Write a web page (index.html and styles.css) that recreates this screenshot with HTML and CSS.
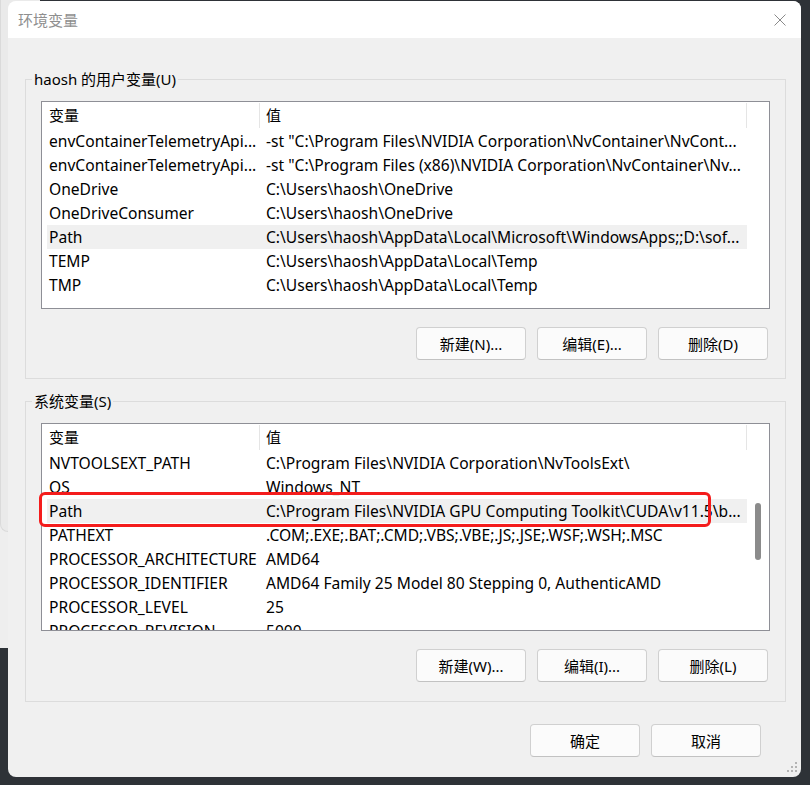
FILE: index.html
```html
<!DOCTYPE html>
<html lang="zh-CN">
<head>
    <meta charset="UTF-8">
    <title>环境变量</title>
    <link rel="stylesheet" href="styles.css">
</head>
<body>
    <div class="behind behind-low"></div>
    <div class="behind behind-high"></div>

    <div class="dialog">
        <div class="titlebar">
            <span class="title">环境变量</span>
            <svg class="close" width="12" height="12" viewBox="0 0 12 12">
                <path d="M0.5 0.5L11.5 11.5M11.5 0.5L0.5 11.5" stroke="#8a8a8a" stroke-width="1" fill="none"/>
            </svg>
        </div>

        <div class="content">
            <fieldset class="group">
                <legend>haosh 的用户变量(U)</legend>
                <div class="list-wrap">
                    <div class="list">
                        <div class="rows">
                            <div class="row head"><span>变量</span><span>值</span></div>
                            <div class="row"><span>envContainerTelemetryApi...</span><span>-st "C:\Program Files\NVIDIA Corporation\NvContainer\NvCont...</span></div>
                            <div class="row"><span>envContainerTelemetryApi...</span><span>-st "C:\Program Files (x86)\NVIDIA Corporation\NvContainer\Nv...</span></div>
                            <div class="row"><span>OneDrive</span><span>C:\Users\haosh\OneDrive</span></div>
                            <div class="row"><span>OneDriveConsumer</span><span>C:\Users\haosh\OneDrive</span></div>
                            <div class="row sel"><span>Path</span><span>C:\Users\haosh\AppData\Local\Microsoft\WindowsApps;;D:\sof...</span></div>
                            <div class="row"><span>TEMP</span><span>C:\Users\haosh\AppData\Local\Temp</span></div>
                            <div class="row"><span>TMP</span><span>C:\Users\haosh\AppData\Local\Temp</span></div>
                        </div>
                        <div class="scroll"></div>
                    </div>
                </div>
                <div class="actions">
                    <button>新建(N)...</button>
                    <button>编辑(E)...</button>
                    <button>删除(D)</button>
                </div>
            </fieldset>

            <fieldset class="group system">
                <legend>系统变量(S)</legend>
                <div class="list-wrap">
                    <div class="list">
                        <div class="rows">
                            <div class="row head"><span>变量</span><span>值</span></div>
                            <div class="row"><span>NVTOOLSEXT_PATH</span><span>C:\Program Files\NVIDIA Corporation\NvToolsExt\</span></div>
                            <div class="row"><span>OS</span><span>Windows_NT</span></div>
                            <div class="row sel"><span>Path</span><span>C:\Program Files\NVIDIA GPU Computing Toolkit\CUDA\v11.5\b...</span></div>
                            <div class="row"><span>PATHEXT</span><span>.COM;.EXE;.BAT;.CMD;.VBS;.VBE;.JS;.JSE;.WSF;.WSH;.MSC</span></div>
                            <div class="row"><span>PROCESSOR_ARCHITECTURE</span><span>AMD64</span></div>
                            <div class="row"><span>PROCESSOR_IDENTIFIER</span><span>AMD64 Family 25 Model 80 Stepping 0, AuthenticAMD</span></div>
                            <div class="row"><span>PROCESSOR_LEVEL</span><span>25</span></div>
                            <div class="row"><span>PROCESSOR_REVISION</span><span>5000</span></div>
                        </div>
                        <div class="scroll"><div class="thumb"></div></div>
                    </div>
                    <div class="mark"></div>
                </div>
                <div class="actions">
                    <button>新建(W)...</button>
                    <button>编辑(I)...</button>
                    <button>删除(L)</button>
                </div>
            </fieldset>

            <div class="footer">
                <button>确定</button>
                <button>取消</button>
            </div>
        </div>

        <svg class="grip" width="11" height="11" viewBox="0 0 11 11">
            <rect x="8" y="0" width="2" height="2" fill="#b4b4b4"/>
            <rect x="4" y="4" width="2" height="2" fill="#b4b4b4"/>
            <rect x="8" y="4" width="2" height="2" fill="#b4b4b4"/>
            <rect x="0" y="8" width="2" height="2" fill="#b4b4b4"/>
            <rect x="4" y="8" width="2" height="2" fill="#b4b4b4"/>
            <rect x="8" y="8" width="2" height="2" fill="#b4b4b4"/>
        </svg>
    </div>
</body>
</html>
```

FILE: styles.css
```css
* {
    box-sizing: border-box;
}
body {
    margin: 0;
    padding-top: 1px;
    width: 810px;
    height: 785px;
    overflow: hidden;
    position: relative;
    background-color: #2e3237;
    font-family: "Noto Sans", "Noto Sans CJK SC", sans-serif;
    font-size: 15px;
    color: #000;
}
.behind {
    position: absolute;
}
.behind-low {
    left: -20px;
    top: 0;
    width: 50px;
    height: 648px;
    background-color: #eeeeee;
}
.behind-high {
    left: 0;
    top: -10px;
    width: 40px;
    height: 542px;
    background-color: #eaeaea;
    border-left: 1px solid #dadada;
    border-bottom: 1px solid #dadada;
    border-radius: 0 0 0 8px;
}
.dialog {
    position: relative;
    margin-left: 8px;
    width: 793px;
    height: 776px;
    background-color: #f0f0f0;
    border-radius: 8px;
    overflow: hidden;
}
.titlebar {
    height: 37px;
    background-color: #fff;
    display: flex;
    align-items: center;
    justify-content: space-between;
    padding: 0 15px 0 10px;
}
.title {
    color: #8f8f8f;
}
.content {
    padding: 31px 15px 0 17px;
}
.group {
    margin: 0;
    padding: 12px 15px 18px;
    border: 1px solid #dcdcdc;
    min-width: 0;
}
.group legend {
    padding: 0 2px;
    margin-left: -9px;
    line-height: 20px;
}
.system {
    margin-top: 12px;
    padding-bottom: 19px;
}
.list-wrap {
    position: relative;
}
.list {
    display: flex;
    height: 208px;
    border: 1px solid #8e8f96;
    background-color: #fff;
    overflow: hidden;
}
.rows {
    padding-left: 5px;
    width: 705px;
    flex-shrink: 0;
}
.row {
    display: grid;
    grid-template-columns: 213px 487px;
    height: 24px;
    line-height: 24px;
    font-size: 15.6px;
}
.row span {
    white-space: nowrap;
    overflow: hidden;
    padding-left: 6px;
}
.row span:first-child {
    padding-left: 2px;
}
.row.sel {
    background-color: #f0f0f0;
}
.row.head {
    height: 27px;
    align-items: center;
    font-size: 15px;
}
.row.head span {
    line-height: 25px;
    border-right: 1px solid #e5e5e5;
}
.scroll {
    flex: 1;
    padding: 79px 0 0 8px;
}
.thumb {
    width: 6px;
    height: 57px;
    border-radius: 3px;
    background-color: #8b8b8b;
}
.mark {
    position: absolute;
    left: -2px;
    top: 69px;
    width: 672px;
    height: 35px;
    border: 3px solid #f41c1c;
    border-radius: 6px;
}
.actions {
    display: flex;
    justify-content: flex-end;
    gap: 11px;
    margin-top: 18px;
    padding-right: 2px;
}
.footer {
    display: flex;
    justify-content: flex-end;
    gap: 11px;
    margin-top: 22px;
    padding-right: 25px;
}
button {
    width: 110px;
    height: 33px;
    padding: 0;
    font-family: inherit;
    font-size: 15px;
    color: #000;
    background-color: #fbfbfb;
    border: 1px solid #d0d0d0;
    border-bottom-color: #c2c2c2;
    border-radius: 4px;
}
.grip {
    position: absolute;
    right: 3px;
    bottom: 4px;
}
```
